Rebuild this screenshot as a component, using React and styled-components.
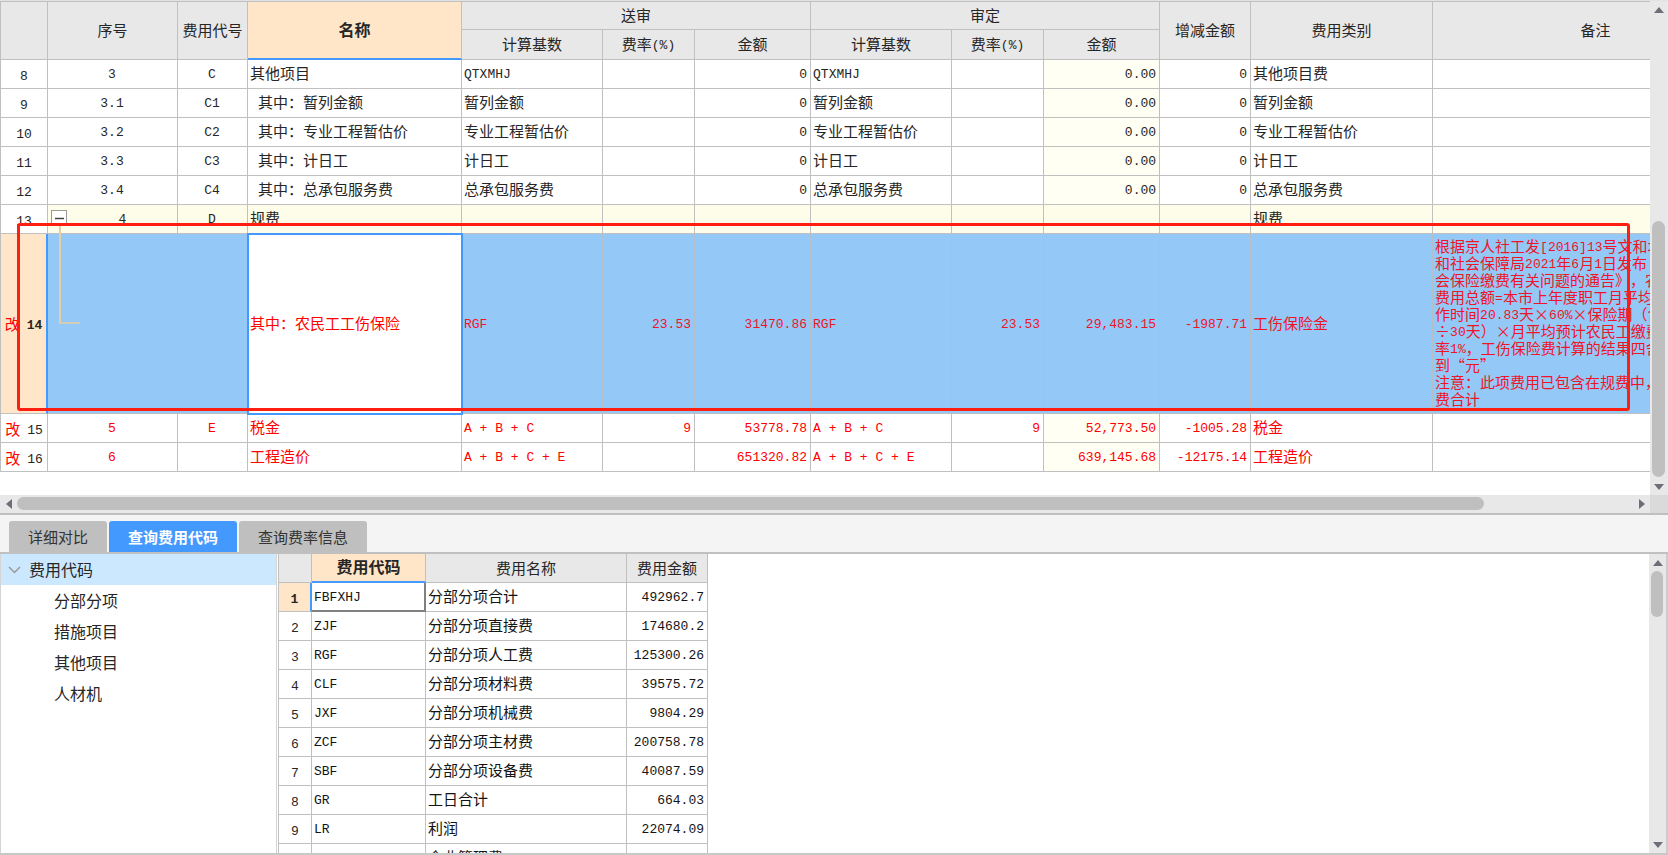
import styled, { createGlobalStyle } from "styled-components";

const GlobalStyle = createGlobalStyle`
  * {
    box-sizing: border-box;
  }
  body {
    margin: 0;
    background: #ffffff;
    color: #262626;
    font-family: "Noto Sans CJK SC", sans-serif;
    font-size: 15px;
    line-height: 17px;
    text-spacing-trim: space-all;
  }
  button {
    font: inherit;
    border: 0;
    padding: 0;
  }
`;

const Page = styled.main`
  display: flex;
  flex-direction: column;
  height: 100vh;
  overflow: hidden;
`;

const ComparePane = styled.section`
  position: relative;
  display: grid;
  grid-template-columns: minmax(0, 1fr) 18px;
  grid-template-rows: auto 18px;
  border-top: 1px solid #e2e2e2;
  border-bottom: 2px solid #c0c0c0;
`;

const GridArea = styled.div`
  overflow: hidden;
  padding-bottom: 23px;
`;

const Grid = styled.table`
  width: ${({ $width }) => $width}px;
  table-layout: fixed;
  border-collapse: separate;
  border-spacing: 0;
  border-left: 1px solid #c0c0c0;
`;

const HeadCell = styled.th`
  height: ${({ $tall }) => ($tall ? 30 : 29)}px;
  padding: 0 0 2px;
  border-right: 1px solid #c0c0c0;
  border-bottom: ${({ $current }) =>
    $current ? "2px solid #4499ff" : "1px solid #c0c0c0"};
  background: ${({ $current }) => ($current ? "#ffe6c8" : "#e8e8e8")};
  font-weight: ${({ $current }) => ($current ? 700 : 400)};
  font-size: ${({ $current }) => ($current ? 16 : 15)}px;
`;

const TopHeadCell = styled(HeadCell)`
  border-top: 1px solid #c0c0c0;
`;

const rowColors = {
  plain: { background: "#ffffff", border: "#c0c0c0", color: "#262626" },
  group: { background: "#fdfde9", border: "#c0c0c0", color: "#262626" },
  changed: { background: "#ffffff", border: "#c0c0c0", color: "#ff0000" },
  selected: { background: "#93c8f7", border: "#b4bec8", color: "#f01428" },
};

const Row = styled.tr`
  height: ${({ $kind }) => ($kind === "selected" ? 180 : 29)}px;
  background: ${({ $kind }) => rowColors[$kind].background};
  color: ${({ $kind }) => rowColors[$kind].color};

  td {
    border-right-color: ${({ $kind }) => rowColors[$kind].border};
  }
`;

const Cell = styled.td`
  position: relative;
  padding: 0 3px 3px;
  padding-left: ${({ $indent }) => $indent || 2}px;
  border-right: 1px solid #c0c0c0;
  border-bottom: 1px solid #c0c0c0;
  text-align: ${({ $align }) => $align || "left"};
  white-space: pre;
`;

const AmountCell = styled(Cell)`
  background: ${({ $tinted }) => ($tinted ? "#fffff3" : "transparent")};
`;

const NameCell = styled(Cell)`
  ${({ $editing }) =>
    $editing &&
    `
    background: #ffffff;
    color: #ff0000;
    outline: 2px solid #4499ff;
    outline-offset: -1px;
    z-index: 1;
  `}
`;

const RowHead = styled.th`
  padding: 0;
  border-right: ${({ $current }) =>
    $current ? "2px solid #4499ff" : "1px solid #c0c0c0"};
  border-bottom: 1px solid #c0c0c0;
  background: ${({ $current }) => ($current ? "#ffe6c8" : "#ffffff")};
  color: #262626;
  font-weight: ${({ $current }) => ($current ? 700 : 400)};
  text-align: center;
`;

const Changed = styled.span`
  margin-right: 7px;
  color: #ff0000;
  font-weight: 400;
`;

const Latin = styled.span`
  font-family: "Liberation Mono", monospace;
  font-size: 13px;
  line-height: 1;
  vertical-align: 1px;
`;

const Collapse = styled.button`
  position: absolute;
  top: 5px;
  left: 3px;
  width: 16px;
  height: 16px;
  border: 1px solid #9a9a9a;
  background: #ffffff;

  svg {
    display: block;
  }
`;

const Branch = styled.span`
  position: absolute;
  top: -8px;
  left: 11px;
  width: 21px;
  height: 98px;
  border-left: 2px solid #e6cfa4;
  border-bottom: 2px solid #d2cdb4;
`;

const Highlight = styled.div`
  position: absolute;
  top: 222px;
  left: 17px;
  right: 38px;
  height: 188px;
  border: 3px solid #ff1f10;
  border-radius: 3px;
  pointer-events: none;
  z-index: 2;
`;

const Bar = styled.div`
  display: flex;
  flex-direction: ${({ $vertical }) => ($vertical ? "column" : "row")};
  background: #e8e8e8;
`;

const BarArrow = styled.button`
  flex: 0 0 17px;
  display: flex;
  align-items: center;
  justify-content: center;
  background: transparent;
`;

const BarSpace = styled.div`
  flex: ${({ $size }) => $size} 1 0;
`;

const Thumb = styled.div`
  flex: ${({ $size }) => $size} 1 0;
  margin: ${({ $vertical }) => ($vertical ? "0 3px 0 2px" : "2px 0 3px")};
  border-radius: 7px;
  background: #bfbfbf;
`;

const Corner = styled.div`
  background: #dadada;
`;

const Tabs = styled.nav`
  display: flex;
  align-items: flex-end;
  gap: 2px;
  padding: 6px 9px 0;
  border-bottom: 2px solid #c0c0c0;
  background: #f4f4f4;
`;

const Tab = styled.button`
  height: 31px;
  padding: 0 19px;
  border-radius: 3px 3px 0 0;
  background: ${({ $active }) => ($active ? "#4499ff" : "#bfbfbf")};
  color: ${({ $active }) => ($active ? "#ffffff" : "#333333")};
  font-weight: ${({ $active }) => ($active ? 700 : 400)};
`;

const CodePane = styled.section`
  flex: 1;
  display: grid;
  grid-template-columns: 277px minmax(0, 1fr) 17px;
  grid-template-rows: minmax(0, 1fr);
  min-height: 0;
  border-right: 2px solid #cccccc;
  border-bottom: 2px solid #c8c8c8;
`;

const Tree = styled.ul`
  margin: 0;
  padding: 0;
  border-left: 1px solid #d4d4d4;
  border-right: 1px solid #d4d4d4;
  list-style: none;
  font-size: 16px;
`;

const TreeItem = styled.li`
  display: flex;
  align-items: center;
  height: 31px;
  padding-left: ${({ $root }) => ($root ? 7 : 53)}px;
  gap: 8px;
  background: ${({ $root }) => ($root ? "#cce8ff" : "transparent")};
`;

const CodeArea = styled.div`
  min-height: 0;
  overflow: hidden;
  padding-left: 1px;
`;

const CodeCell = styled(Cell)`
  color: #141414;
  ${({ $current }) =>
    $current &&
    `
    && {
      border-right: 2px solid #808080;
      border-bottom: 2px solid #808080;
    }
  `}
`;

const compareColumns = [47, 130, 70, 214, 141, 92, 116, 141, 92, 116, 91, 182, 326];
const codeColumns = [33, 114, 201, 81];

const note = `根据京人社工发[2016]13号文和北
和社会保障局2021年6月1日发布《
会保险缴费有关问题的通告》，农
费用总额=本市上年度职工月平均
作时间20.83天×60%×保险期（含
÷30天）×月平均预计农民工缴费
率1%，工伤保险费计算的结果四舍
到“元”
注意：此项费用已包含在规费中，
费合计`;

const compareRows = [
  { id: 8, no: "3", code: "C", name: "其他项目", base: "QTXMHJ", sent: "0", approved: "0.00", diff: "0", type: "其他项目费" },
  { id: 9, no: "3.1", code: "C1", name: "其中：暂列金额", child: true, base: "暂列金额", sent: "0", approved: "0.00", diff: "0", type: "暂列金额" },
  { id: 10, no: "3.2", code: "C2", name: "其中：专业工程暂估价", child: true, base: "专业工程暂估价", sent: "0", approved: "0.00", diff: "0", type: "专业工程暂估价" },
  { id: 11, no: "3.3", code: "C3", name: "其中：计日工", child: true, base: "计日工", sent: "0", approved: "0.00", diff: "0", type: "计日工" },
  { id: 12, no: "3.4", code: "C4", name: "其中：总承包服务费", child: true, base: "总承包服务费", sent: "0", approved: "0.00", diff: "0", type: "总承包服务费" },
  { id: 13, kind: "group", no: "4", code: "D", name: "规费", type: "规费" },
  { id: 14, kind: "selected", name: "其中：农民工工伤保险", base: "RGF", rate: "23.53", sent: "31470.86", approved: "29,483.15", diff: "-1987.71", type: "工伤保险金", note },
  { id: 15, kind: "changed", no: "5", code: "E", name: "税金", base: "A + B + C", rate: "9", sent: "53778.78", approved: "52,773.50", diff: "-1005.28", type: "税金" },
  { id: 16, kind: "changed", no: "6", name: "工程造价", base: "A + B + C + E", sent: "651320.82", approved: "639,145.68", diff: "-12175.14", type: "工程造价" },
];

const codeRows = [
  ["FBFXHJ", "分部分项合计", "492962.7"],
  ["ZJF", "分部分项直接费", "174680.2"],
  ["RGF", "分部分项人工费", "125300.26"],
  ["CLF", "分部分项材料费", "39575.72"],
  ["JXF", "分部分项机械费", "9804.29"],
  ["ZCF", "分部分项主材费", "200758.78"],
  ["SBF", "分部分项设备费", "40087.59"],
  ["GR", "工日合计", "664.03"],
  ["LR", "利润", "22074.09"],
  ["QYGLF", "企业管理费", "25224.28"],
];

// Latin runs use the monospaced face, about half as wide as a Chinese character.
const Text = ({ children }) =>
  String(children ?? "")
    .split(/([\x20-\x7e]+)/)
    .map((part, i) => (i % 2 ? <Latin key={i}>{part}</Latin> : part));

const arrows = {
  up: "M0 6 L5 0 L10 6 Z",
  down: "M0 0 L10 0 L5 6 Z",
  left: "M6 0 L6 10 L0 5 Z",
  right: "M0 0 L6 5 L0 10 Z",
};

const Arrow = ({ direction }) => {
  const upright = direction === "up" || direction === "down";
  return (
    <svg width={upright ? 10 : 6} height={upright ? 6 : 10} aria-hidden="true">
      <path d={arrows[direction]} fill="#6e6e78" />
    </svg>
  );
};

const ScrollBar = ({ vertical, before, size, after }) => (
  <Bar $vertical={vertical}>
    <BarArrow aria-label={vertical ? "向上" : "向左"}>
      <Arrow direction={vertical ? "up" : "left"} />
    </BarArrow>
    <BarSpace $size={before} />
    <Thumb $vertical={vertical} $size={size} />
    <BarSpace $size={after} />
    <BarArrow aria-label={vertical ? "向下" : "向右"}>
      <Arrow direction={vertical ? "down" : "right"} />
    </BarArrow>
  </Bar>
);

const Columns = ({ widths }) => (
  <colgroup>
    {widths.map((width, i) => (
      <col key={i} style={{ width }} />
    ))}
  </colgroup>
);

// One extra pixel for the left border of the table.
const total = (widths) => widths.reduce((sum, width) => sum + width, 1);

const CompareRow = ({ row }) => {
  const kind = row.kind || "plain";
  const selected = kind === "selected";
  const group = kind === "group";
  return (
    <Row $kind={kind}>
      <RowHead scope="row" $current={selected}>
        {(selected || kind === "changed") && <Changed>改</Changed>}
        <Latin>{row.id}</Latin>
      </RowHead>
      <Cell $align="center" $indent={group ? 23 : 2}>
        {group && (
          <Collapse aria-label="折叠">
            <svg width="14" height="14" aria-hidden="true">
              <path d="M3 7.5 H12" stroke="#444444" strokeWidth="1.5" />
            </svg>
          </Collapse>
        )}
        {selected && <Branch />}
        <Text>{row.no}</Text>
      </Cell>
      <Cell $align="center">
        <Text>{row.code}</Text>
      </Cell>
      <NameCell $editing={selected} $indent={row.child ? 10 : 2}>
        {row.name}
      </NameCell>
      <Cell>
        <Text>{row.base}</Text>
      </Cell>
      <Cell $align="right">
        <Text>{row.rate}</Text>
      </Cell>
      <Cell $align="right">
        <Text>{row.sent}</Text>
      </Cell>
      <Cell>
        <Text>{row.base}</Text>
      </Cell>
      <Cell $align="right">
        <Text>{row.rate}</Text>
      </Cell>
      <AmountCell $align="right" $tinted={!selected && !group}>
        <Text>{row.approved}</Text>
      </AmountCell>
      <Cell $align="right">
        <Text>{row.diff}</Text>
      </Cell>
      <Cell>{row.type}</Cell>
      <Cell>
        <Text>{row.note}</Text>
      </Cell>
    </Row>
  );
};

const CompareTable = () => (
  <Grid $width={total(compareColumns)}>
    <Columns widths={compareColumns} />
    <thead>
      <tr>
        <TopHeadCell rowSpan={2} />
        <TopHeadCell rowSpan={2}>序号</TopHeadCell>
        <TopHeadCell rowSpan={2}>费用代号</TopHeadCell>
        <TopHeadCell rowSpan={2} $current>
          名称
        </TopHeadCell>
        <TopHeadCell colSpan={3}>送审</TopHeadCell>
        <TopHeadCell colSpan={3}>审定</TopHeadCell>
        <TopHeadCell rowSpan={2}>增减金额</TopHeadCell>
        <TopHeadCell rowSpan={2}>费用类别</TopHeadCell>
        <TopHeadCell rowSpan={2}>备注</TopHeadCell>
      </tr>
      <tr>
        {["计算基数", "费率(%)", "金额", "计算基数", "费率(%)", "金额"].map(
          (title, i) => (
            <HeadCell key={i} $tall>
              <Text>{title}</Text>
            </HeadCell>
          )
        )}
      </tr>
    </thead>
    <tbody>
      {compareRows.map((row) => (
        <CompareRow key={row.id} row={row} />
      ))}
    </tbody>
  </Grid>
);

const CodeTable = () => (
  <Grid $width={total(codeColumns)}>
    <Columns widths={codeColumns} />
    <thead>
      <tr>
        <HeadCell />
        <HeadCell $current>费用代码</HeadCell>
        <HeadCell>费用名称</HeadCell>
        <HeadCell>费用金额</HeadCell>
      </tr>
    </thead>
    <tbody>
      {codeRows.map(([code, name, amount], i) => (
        <Row key={code} $kind="plain">
          <RowHead scope="row" $current={i === 0}>
            <Latin>{i + 1}</Latin>
          </RowHead>
          <CodeCell $current={i === 0}>
            <Text>{code}</Text>
          </CodeCell>
          <CodeCell>{name}</CodeCell>
          <CodeCell $align="right">
            <Text>{amount}</Text>
          </CodeCell>
        </Row>
      ))}
    </tbody>
  </Grid>
);

export default function App() {
  return (
    <Page lang="zh-CN">
      <GlobalStyle />
      <ComparePane>
        <GridArea>
          <CompareTable />
        </GridArea>
        <ScrollBar vertical before={203} size={257} after={1} />
        <ScrollBar before={0} size={1467} after={149} />
        <Corner />
        <Highlight />
      </ComparePane>
      <Tabs>
        <Tab>详细对比</Tab>
        <Tab $active>查询费用代码</Tab>
        <Tab>查询费率信息</Tab>
      </Tabs>
      <CodePane>
        <Tree>
          <TreeItem $root>
            <svg width="13" height="8" aria-hidden="true">
              <path
                d="M1 1 L6.5 6.5 L12 1"
                fill="none"
                stroke="#9a9a9a"
                strokeWidth="1.5"
              />
            </svg>
            费用代码
          </TreeItem>
          {["分部分项", "措施项目", "其他项目", "人材机"].map((label) => (
            <TreeItem key={label}>{label}</TreeItem>
          ))}
        </Tree>
        <CodeArea>
          <CodeTable />
        </CodeArea>
        <ScrollBar vertical before={0} size={46} after={219} />
      </CodePane>
    </Page>
  );
}
